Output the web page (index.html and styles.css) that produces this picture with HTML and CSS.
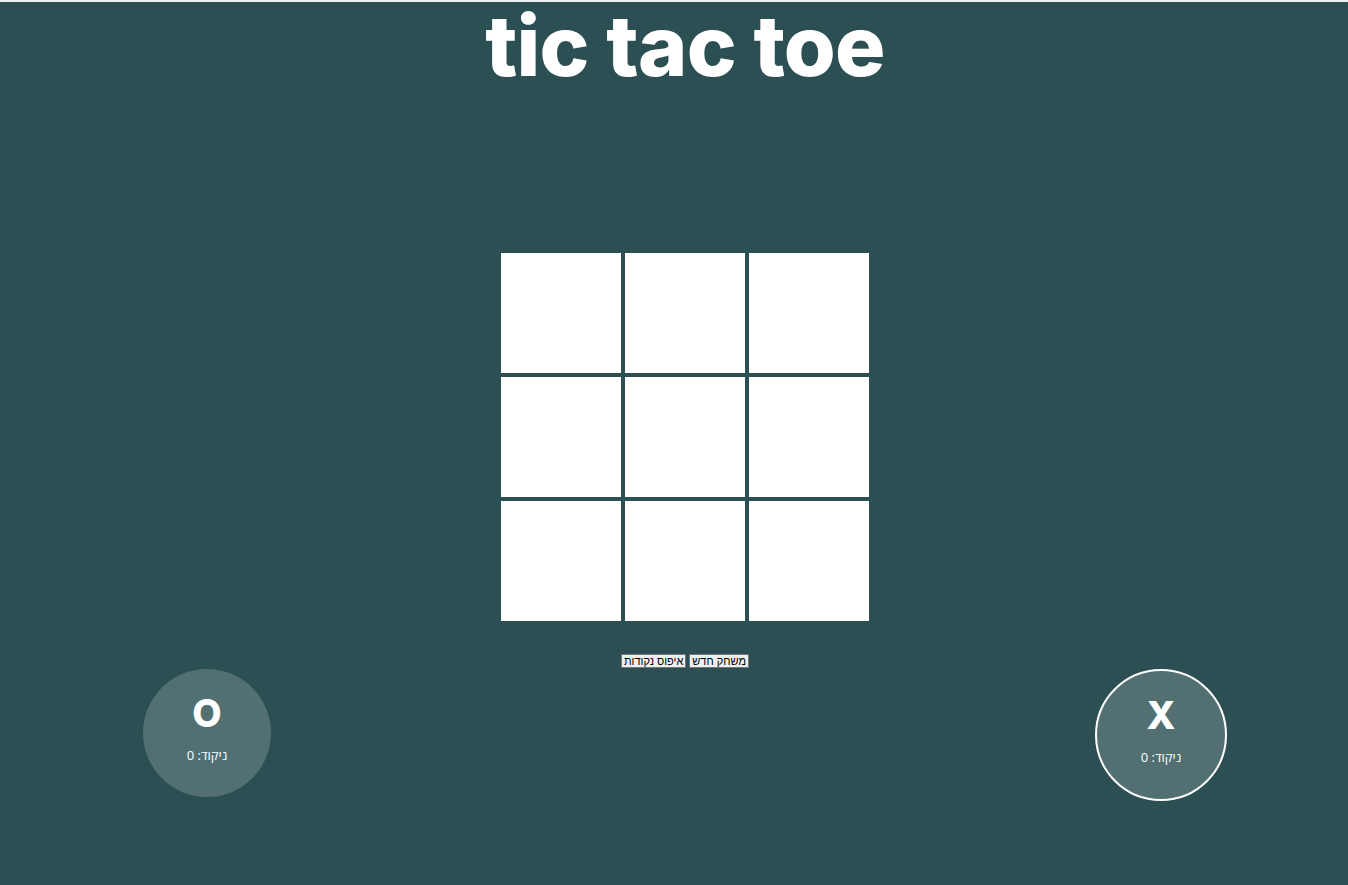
FILE: index.html
```html
<!DOCTYPE html>
<html lang="he">
<head>
<meta charset="utf-8">
<title>tic tac toe</title>
<link rel="stylesheet" href="styles.css">
</head>
<body>
<div class="page">
  <h1 class="title">tic tac toe</h1>
  <div class="board">
    <div class="cell"></div><div class="cell"></div><div class="cell"></div>
    <div class="cell"></div><div class="cell"></div><div class="cell"></div>
    <div class="cell"></div><div class="cell"></div><div class="cell"></div>
  </div>
  <div class="controls" dir="rtl">
    <button class="btn">משחק חדש</button>
    <button class="btn">איפוס נקודות</button>
  </div>
  <div class="players">
    <div class="player">
      <div class="mark">O</div>
      <div class="score" dir="rtl">ניקוד: 0</div>
    </div>
    <div class="player active">
      <div class="mark">X</div>
      <div class="score" dir="rtl">ניקוד: 0</div>
    </div>
  </div>
</div>
</body>
</html>
```
FILE: styles.css
```css
html, body {
  margin: 0;
  padding: 0;
  overflow: hidden;
}
body {
  background: #2c4f54;
  border-top: 2px solid #eef2f2;
  height: 883px;
  font-family: "Open Sans", "Liberation Sans", sans-serif;
  color: #fff;
}
.page {
  width: 1370px;
  display: flex;
  flex-direction: column;
  align-items: center;
}
.title {
  margin: 0;
  font-family: Inter, "Open Sans", sans-serif;
  font-weight: 800;
  font-size: 84px;
  line-height: 88px;
  letter-spacing: -0.8px;
  color: #fff;
}
.board {
  margin-top: 163px;
  display: grid;
  grid-template-columns: repeat(3, 120px);
  grid-template-rows: repeat(3, 120px);
  gap: 4px;
}
.cell {
  background: #fff;
}
.controls {
  margin-top: 33px;
  display: flex;
  gap: 3px;
}
.btn {
  font-family: "Liberation Sans", "DejaVu Sans", sans-serif;
  font-size: 11px;
  line-height: 12px;
  padding: 0 2px;
  height: 14px;
  background: #efefef;
  color: #000;
  border: 1px solid #767676;
  border-radius: 0;
}
.players {
  margin-top: 1px;
  width: 100%;
  box-sizing: border-box;
  padding: 0 143px;
  display: flex;
  justify-content: space-between;
  align-items: flex-start;
}
.player {
  width: 128px;
  height: 128px;
  border-radius: 50%;
  background: #527071;
  display: flex;
  flex-direction: column;
  align-items: center;
}
.player.active {
  border: 2px solid #fff;
}
.mark {
  margin-top: 20px;
  font-family: Inter, "Open Sans", sans-serif;
  font-weight: 800;
  font-size: 38px;
  line-height: 48px;
}
.score {
  margin-top: 10px;
  font-size: 13px;
  line-height: 16px;
}
```
